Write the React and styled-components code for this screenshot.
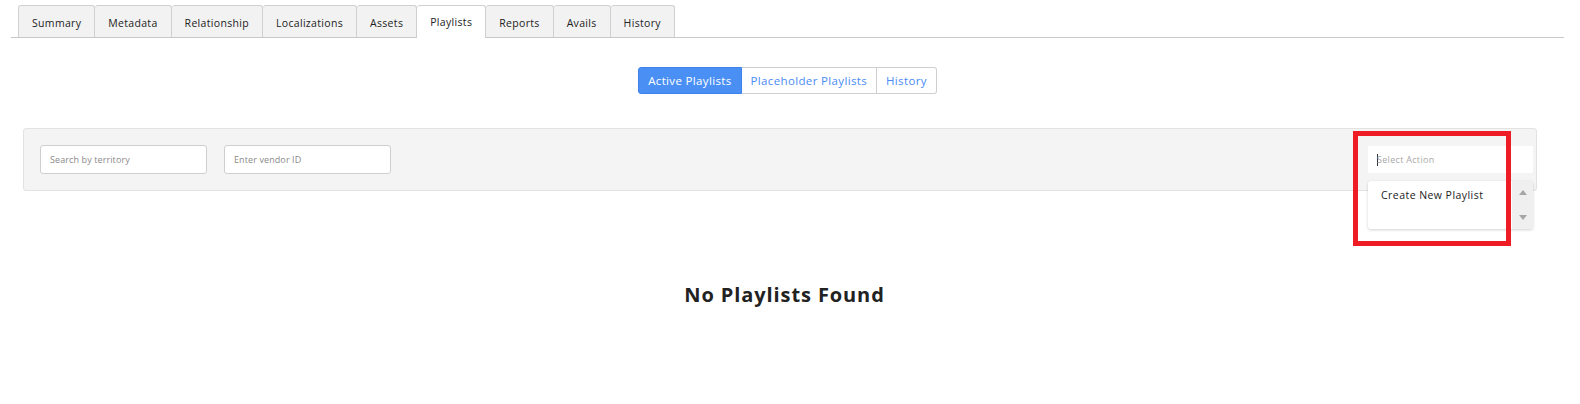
import React from 'react';
import styled, { createGlobalStyle } from 'styled-components';

const GlobalStyle = createGlobalStyle`
  body {
    margin: 0;
    background: #fff;
    font-family: "Open Sans", "Liberation Sans", Arial, sans-serif;
    color: #222;
  }
`;

const TABS = ['Summary', 'Metadata', 'Relationship', 'Localizations', 'Assets', 'Playlists', 'Reports', 'Avails', 'History'];
const VIEWS = ['Active Playlists', 'Placeholder Playlists', 'History'];

const App = () => {
  return (
    <Root>
      <GlobalStyle />
      <TabBar>
        {TABS.map((t) => (
          <Tab key={t} active={t === 'Playlists'}>{t}</Tab>
        ))}
      </TabBar>

      <ViewSwitch>
        {VIEWS.map((v, i) => (
          <ViewButton key={v} active={i === 0}>{v}</ViewButton>
        ))}
      </ViewSwitch>

      <FilterPanel>
        <Field placeholder='Search by territory' />
        <Field placeholder='Enter vendor ID' />
        <Spacer />
        <ActionSelect>
          <ActionInput>
            <Caret />
            Select Action
          </ActionInput>
          <Menu>
            <MenuList>
              <MenuItem>Create New Playlist</MenuItem>
            </MenuList>
            <MenuScroll>
              <Arrow up />
              <Arrow />
            </MenuScroll>
          </Menu>
          <Highlight />
        </ActionSelect>
      </FilterPanel>

      <Empty>No Playlists Found</Empty>
    </Root>
  );
};

const Root = styled.div`
  width: 1553px;
  margin-left: 11px;
  height: 404px;
`;

const TabBar = styled.div`
  display: flex;
  padding: 5px 0 0 7px;
  border-bottom: 1px solid #c8c8c8;
`;

const Tab = styled.div`
  padding: 0 13px;
  display: flex;
  align-items: center;
  padding-top: ${(p) => (p.active ? '0' : '3px')};
  box-sizing: border-box;
  font-size: 10.5px;
  letter-spacing: 0.32px;
  color: #222;
  background: ${(p) => (p.active ? '#fff' : '#f2f2f2')};
  border: 1px solid #d0d0d0;
  border-bottom: none;
  border-left: none;
  margin-bottom: ${(p) => (p.active ? '-1px' : '0')};
  height: ${(p) => (p.active ? '33px' : '32px')};
  border-radius: 3px 3px 0 0;
  &:first-child {
    border-left: 1px solid #d0d0d0;
  }
`;

const ViewSwitch = styled.div`
  display: flex;
  justify-content: center;
  margin-top: 29px;
`;

const ViewButton = styled.div`
  height: 27px;
  box-sizing: border-box;
  padding: 0 9px;
  display: flex;
  align-items: center;
  font-size: 11.5px;
  letter-spacing: 0.35px;
  color: ${(p) => (p.active ? '#fff' : '#4a8cf6')};
  background: ${(p) => (p.active ? '#4a90f4' : '#fff')};
  border: 1px solid ${(p) => (p.active ? '#3d82ea' : '#cfcfcf')};
  border-left: none;
  &:first-child {
    border-left: 1px solid #3d82ea;
    border-radius: 3px 0 0 3px;
  }
  &:last-child {
    border-radius: 0 3px 3px 0;
  }
`;

const FilterPanel = styled.div`
  display: flex;
  align-items: center;
  gap: 17px;
  margin: 34px 27px 0 12px;
  height: 63px;
  box-sizing: border-box;
  padding: 0 3px 0 16px;
  background: #f4f4f4;
  border: 1px solid #e2e2e2;
  border-radius: 3px;
`;

const Field = styled.input`
  width: 167px;
  height: 29px;
  box-sizing: border-box;
  padding: 0 9px;
  border: 1px solid #cfcfcf;
  border-radius: 3px;
  background: #fff;
  font-family: inherit;
  font-size: 9px;
  letter-spacing: 0.1px;
  outline: none;
  &::placeholder {
    color: #8a8a8a;
  }
`;

const Spacer = styled.div`
  flex: 1;
`;

const ActionSelect = styled.div`
  position: relative;
  width: 165px;
`;

const ActionInput = styled.div`
  height: 27px;
  display: flex;
  align-items: center;
  padding-left: 9px;
  background: #fff;
  font-size: 9px;
  letter-spacing: 0.3px;
  color: #a8a8a8;
`;

const Caret = styled.span`
  width: 1px;
  height: 12px;
  background: #333;
  margin-right: -1px;
`;

const Menu = styled.div`
  position: absolute;
  top: 35px;
  left: 0;
  width: 165px;
  height: 48px;
  display: flex;
  background: #fff;
  border-radius: 3px;
  box-shadow: 0 1px 3px rgba(0, 0, 0, 0.18);
  z-index: 2;
`;

const MenuList = styled.div`
  flex: 1;
`;

const MenuItem = styled.div`
  padding: 7px 0 0 13px;
  font-size: 10.5px;
  letter-spacing: 0.45px;
  color: #222;
`;

const MenuScroll = styled.div`
  width: 21px;
  background: #efefef;
  display: flex;
  flex-direction: column;
  justify-content: space-between;
  align-items: center;
  padding: 9px 0 9px;
  border-radius: 0 3px 3px 0;
`;

const Arrow = styled.span`
  width: 0;
  height: 0;
  border-left: 4px solid transparent;
  border-right: 4px solid transparent;
  ${(p) => (p.up ? 'border-bottom: 5px solid #a6a6a6;' : 'border-top: 5px solid #a6a6a6;')}
`;

const Highlight = styled.div`
  position: absolute;
  left: -15px;
  top: -15px;
  width: 158px;
  height: 115px;
  box-sizing: border-box;
  border: 5px solid #ee1c25;
  z-index: 3;
  pointer-events: none;
`;

const Empty = styled.div`
  margin-top: 90px;
  text-align: center;
  font-size: 20px;
  font-weight: 700;
  letter-spacing: 0.9px;
  color: #222;
  padding-right: 6px;
`;

export default App;
